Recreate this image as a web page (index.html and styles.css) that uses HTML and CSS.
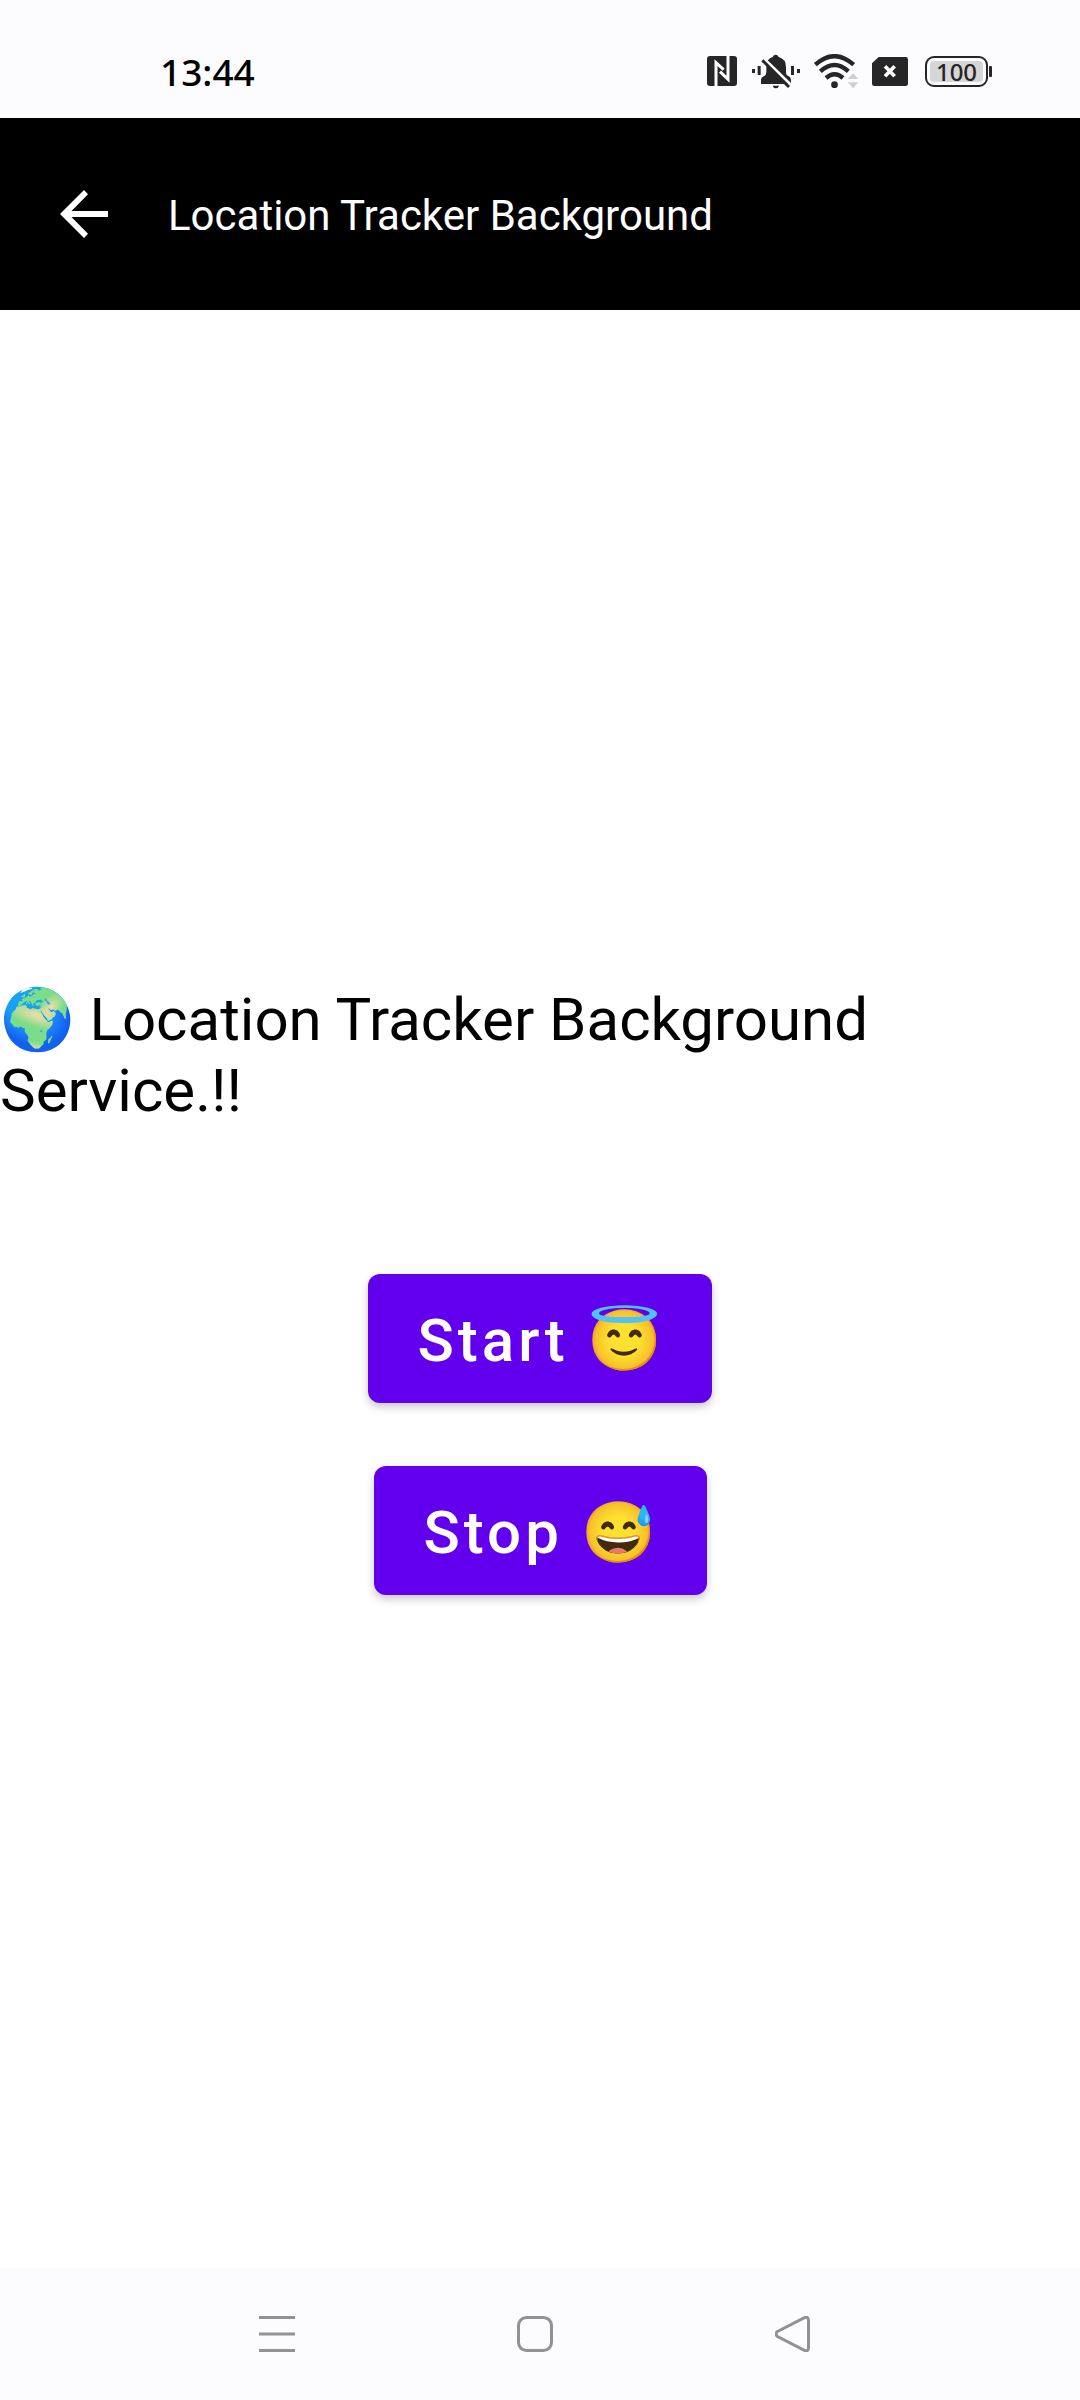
FILE: index.html
```html
<!DOCTYPE html>
<html lang="en">
<head>
<meta charset="utf-8">
<meta name="viewport" content="width=device-width, initial-scale=1">
<title>Location Tracker Background</title>
<link rel="stylesheet" href="styles.css">
</head>
<body>
<div class="screen">
  <div class="status-bar">
    <time class="clock">13:44</time>
    <div class="status-icons">
      <svg class="nfc" viewBox="51 51 90 90" aria-label="NFC"><rect x="51" y="51" width="90" height="90" rx="9" fill="#262626"/><path d="M78 141V71L101 92M114 51v70L90 98" fill="none" stroke="#fcfcff" stroke-width="9"/></svg>
      <svg class="bell" viewBox="183 42 150 105" aria-label="Muted"><g fill="#262626"><path d="M213 132v-13q0-7 9-10q7-4 7-13V79q0-23 19-28q3-7 9-7t9 7q22 6 22 30v15q0 10 7 12q8 3 8 12v8q-3 4-9 4z"/><path d="M248 137h19q-2 8-9.500 8t-9.500-8z"/><path d="M186 87h9v12h-9zM203 78h9v27h-9zM303 78h9v27h-9zM321 87h9v12h-9z"/></g><path d="M223 57l80 78" stroke="#fcfcff" stroke-width="9"/><path d="M217 61l80 80" stroke="#262626" stroke-width="9"/></svg>
      <svg class="wifi" viewBox="369 42 138 105" aria-label="Wi-Fi"><g fill="none" stroke="#262626" stroke-width="13"><path d="M376 74q57-51 115 0"/><path d="M391 94q43-38 84 0"/><path d="M408 114q26-22 51 0"/></g><circle cx="433.500" cy="134" r="10" fill="#262626"/><path d="M489 100l16 17h-32zM489 145l16-18h-32z" fill="#d0d0d2"/></svg>
      <svg class="sim" viewBox="66 51 108 87" aria-label="No SIM"><path d="M86 51h81q7 0 7 7v73q0 7-7 7H73q-7 0-7-7V70z" fill="#262626"/><path d="M105 79l29 30M134 79l-29 30" stroke="#fcfcff" stroke-width="11"/></svg>
      <span class="battery">100</span>
    </div>
  </div>
  <header class="app-bar">
    <button class="back" aria-label="Back"><svg viewBox="0 0 48 48"><path d="M48 21H11.500L28 4.300L24 0L0 24l24 24l4-4.300L11.500 27H48z" fill="#fff"/></svg></button>
    <h1 class="title">Location Tracker Background</h1>
  </header>
  <main class="content">
    <p class="message">🌍 Location Tracker Background Service.!!</p>
    <div class="actions">
      <button class="action">Start 😇</button>
      <button class="action">Stop 😅</button>
    </div>
  </main>
  <nav class="nav-bar" aria-label="System">
    <button aria-label="Recents"><svg viewBox="0 0 36 36"><path d="M0 1.500h36M0 18h36M0 34.500h36"/></svg></button>
    <button aria-label="Home"><svg viewBox="0 0 36 36"><rect x="1.500" y="1.500" width="33" height="33" rx="8"/></svg></button>
    <button aria-label="Back"><svg viewBox="0 0 36 36"><path d="M2.500 15.500L29 1.800Q33 0 33.500 4V32Q33 36 29 34.200L2.500 20.500Q-.5 18 2.500 15.500z"/></svg></button>
  </nav>
</div>
</body>
</html>
```
FILE: styles.css
```css
* { box-sizing: border-box; }
body { margin: 0; background: #fff; color: #000; font-family: Roboto, "Noto Color Emoji", sans-serif; }
button { border: 0; padding: 0; background: none; font: inherit; color: inherit; }
svg { display: block; }
.screen { min-height: 100vh; display: flex; flex-direction: column; }

.status-bar { height: 118px; padding: 24px 88px 0 160px; display: flex; align-items: center; justify-content: space-between; background: #fcfcff; }
.clock { padding-top: 2px; font: 500 37px/48px "Noto Sans", sans-serif; }
.status-icons { display: flex; align-items: center; }
.nfc { width: 30px; height: 30px; margin-right: 14px; }
.bell { width: 50px; height: 35px; margin-right: 12px; }
.wifi { width: 46px; height: 35px; margin-right: 13px; }
.sim { width: 36px; height: 29px; margin-right: 17px; }
.battery { position: relative; width: 63px; height: 31px; margin-right: 4px; border: 2px solid #262626; border-radius: 9px; padding: 3px; background: #d6d6d7 content-box; font: 500 24px/21px "Noto Sans", sans-serif; text-align: center; color: #262626; }
.battery::after { content: ""; position: absolute; right: -6px; top: 8px; width: 3px; height: 11px; border-radius: 1px; background: #262626; }

.app-bar { height: 192px; padding: 0 60px; display: flex; align-items: center; gap: 60px; background: #000; color: #fff; }
.back svg { width: 48px; height: 48px; }
.title { margin: 0; padding-top: 4px; font-size: 42px; line-height: 50px; font-weight: 400; }

.content { flex: 1; display: flex; flex-direction: column; justify-content: center; gap: 148px; }
.message { margin: 0; font-size: 60px; line-height: 71px; }
.actions { display: flex; flex-direction: column; align-items: center; gap: 63px; }
.action { height: 129px; padding: 5px 46px 0 50px; border-radius: 12px; background: #6200ee; color: #fff; font-size: 60px; line-height: 71px; font-weight: 500; letter-spacing: 4px; box-shadow: 0 4px 8px rgba(0, 0, 0, .22); }

.nav-bar { height: 132px; padding-right: 10px; display: flex; align-items: center; justify-content: center; gap: 222px; background: #fcfcff; }
.nav-bar svg { width: 36px; height: 36px; fill: none; stroke: #929295; stroke-width: 3; }
```
